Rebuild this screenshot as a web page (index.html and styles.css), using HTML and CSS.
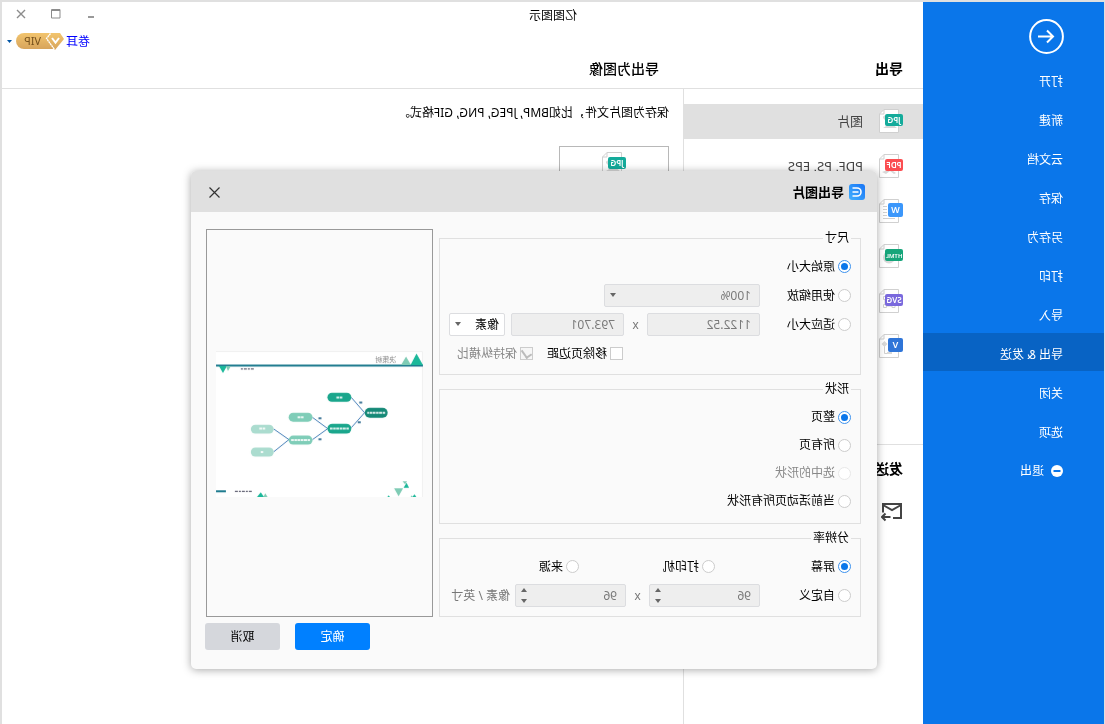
FILE: index.html
```html
<!DOCTYPE html>
<html lang="zh-CN">
<head>
<meta charset="utf-8">
<title>亿图图示</title>
<link rel="stylesheet" href="styles.css">
</head>
<body>
<div class="window">
  <nav class="sidebar">
    <button class="back" aria-label="返回">
      <svg width="35" height="35" viewBox="0 0 35 35" fill="none" stroke="#fff" stroke-width="2"><circle cx="17.500" cy="17.500" r="16.400"/><path d="M26 17.500H11M17 11.500l-6 6 6 6"/></svg>
    </button>
    <ul class="menu">
      <li><button class="menu-item">打开</button></li>
      <li><button class="menu-item">新建</button></li>
      <li><button class="menu-item">云文档</button></li>
      <li><button class="menu-item">保存</button></li>
      <li><button class="menu-item">另存为</button></li>
      <li><button class="menu-item">打印</button></li>
      <li><button class="menu-item">导入</button></li>
      <li><button class="menu-item current">导出 &amp; 发送</button></li>
      <li><button class="menu-item">关闭</button></li>
      <li><button class="menu-item">选项</button></li>
      <li><button class="menu-item exit"><svg width="12" height="12" viewBox="0 0 12 12"><circle cx="6" cy="6" r="6" fill="#fff"/><path d="M2.500 6h7" stroke="#0a76ea" stroke-width="2"/></svg>退出</button></li>
    </ul>
  </nav>

  <main class="content">
    <header class="titlebar">
      <div class="app-title">亿图图示</div>
      <div class="controls">
        <button class="control" aria-label="最小化"><svg width="10" height="10" viewBox="0 0 10 10"><path d="M2 7h6v2H2z" fill="#999"/></svg></button>
        <button class="control" aria-label="最大化"><svg width="10" height="10" viewBox="0 0 10 10"><path d="M1 1.500h8.500M1 .5h8.500v8.500H1z" fill="none" stroke="#8c8c8c"/></svg></button>
        <button class="control" aria-label="关闭窗口"><svg width="10" height="10" viewBox="0 0 10 10"><path d="M1 1l8 8M9 1l-8 8" stroke="#8c8c8c" stroke-width="1.400"/></svg></button>
      </div>
    </header>
    <div class="account">
      <a class="user" href="#">卷耳</a>
      <svg class="vip" width="48" height="17" viewBox="0 0 48 17">
        <defs><linearGradient id="gold" x1="0" y1="0" x2="0" y2="1"><stop offset="0" stop-color="#f2c46d"/><stop offset="1" stop-color="#d7a45c"/></linearGradient></defs>
        <path d="M8 0h32a8 8 0 0 1 0 16H8z" fill="url(#gold)"/>
        <path d="M4 0h10l4 5-9 12L0 6z" fill="url(#gold)"/>
        <path d="M13.500 .5l4 5-8 11" fill="none" stroke="#fff" stroke-width="1.300" stroke-dasharray="2 .5"/>
        <path d="M5 5l3.500 4.500L12 5" fill="none" stroke="#fff" stroke-width="2"/>
        <text x="23" y="12" class="vip-text">VIP</text>
      </svg>
      <svg class="account-caret" width="5" height="3" viewBox="0 0 5 3"><path d="M0 0h5L2.500 3z" fill="#0055a5"/></svg>
    </div>
    <div class="headings">
      <h2 class="list-heading">导出</h2>
      <h1 class="page-heading">导出为图像</h1>
    </div>
    <div class="columns">
      <aside class="formats">
        <button class="format selected">
          <svg class="file" viewBox="0 0 24 24"><path class="page" d="M4.500 .5H19l4.500 4.500v18.500h-19z"/><path class="fold" d="M19 .5V5h4.500"/><path class="mark" d="M6 19l6-5 8 5zM16 8a2 2 0 1 1 4 1l-2 2z"/><rect width="18" height="12" y="5" rx="2" fill="#14ab9b"/><text x="9" y="14" class="tag">JPG</text></svg>
          图片
        </button>
        <button class="format">
          <svg class="file" viewBox="0 0 24 24"><path class="page" d="M4.500 .5H19l4.500 4.500v18.500h-19z"/><path class="fold" d="M19 .5V5h4.500"/><path class="mark" d="M7 19l6-4 8 3-4 2-4-3-4 3z"/><rect width="18" height="12" y="5" rx="2" fill="#fb4d51"/><text x="9" y="14" class="tag">PDF</text></svg>
          PDF, PS, EPS
        </button>
        <button class="format" aria-label="Word">
          <svg class="file" viewBox="0 0 24 24"><path class="page" d="M4.500 .5H19l4.500 4.500v18.500h-19z"/><path class="fold" d="M19 .5V5h4.500M16 7.500h4M16 10.500h4M16 13.500h4M16 16.500h4M8 19.500h12"/><rect width="15" height="14" y="4" rx="2" fill="#3b97fb"/><text x="7.500" y="14" class="tag big">W</text></svg>
        </button>
        <button class="format" aria-label="HTML">
          <svg class="file" viewBox="0 0 24 24"><path class="page" d="M4.500 .5H19l4.500 4.500v18.500h-19z"/><path class="fold" d="M19 .5V5h4.500"/><circle class="mark" cx="14" cy="13.500" r="6"/><rect width="18" height="12" y="5" rx="2" fill="#16a57a"/><text x="9" y="13.500" class="tag small">HTML</text></svg>
        </button>
        <button class="format" aria-label="SVG">
          <svg class="file" viewBox="0 0 24 24"><path class="page" d="M4.500 .5H19l4.500 4.500v18.500h-19z"/><path class="fold" d="M19 .5V5h4.500M8 15.500h3v3H8zM16.500 15.500h3v3h-3zM11 17h5.500M16.500 7.500h3v3h-3zM18 11v5"/><rect width="18" height="12" y="5" rx="2" fill="#7a69dd"/><text x="9" y="14" class="tag">SVG</text></svg>
        </button>
        <button class="format" aria-label="Visio">
          <svg class="file" viewBox="0 0 24 24"><path class="page" d="M4.500 .5H19l4.500 4.500v18.500h-19z"/><path class="fold" d="M19 .5V5h4.500M18.500 10v9.500H11"/><path class="mark" d="M18.500 7l3 3-3 3-3-3zM11 18h5v2h-5z"/><rect width="15" height="14" y="4" rx="2" fill="#2f75d8"/><text x="7.500" y="14" class="tag big">V</text></svg>
        </button>
        <section class="send">
          <h2 class="send-heading">发送</h2>
          <button class="mail" aria-label="发送邮件"><svg width="22" height="20" viewBox="0 0 22 20" fill="none" stroke="#444" stroke-width="2"><path d="M20 10.500V2H2v14h8"/><path d="M2 3l9 5 9-5"/><path d="M12.500 15h8M17.500 11.500l3.500 3.500-3.500 3.500"/></svg></button>
        </section>
      </aside>
      <section class="details">
        <p class="description">保存为图片文件，比如BMP, JPEG, PNG, GIF格式。</p>
        <button class="card" aria-label="JPG">
          <svg class="file" viewBox="0 0 24 24"><path class="page" d="M4.500 .5H19l4.500 4.500v18.500h-19z"/><path class="fold" d="M19 .5V5h4.500"/><path class="mark" d="M6 19l6-5 8 5zM16 10a2 2 0 1 1 4 1l-2 2z"/><rect width="18" height="12" y="5" rx="2" fill="#14ab9b"/><text x="9" y="14" class="tag">JPG</text></svg>
        </button>
      </section>
    </div>
  </main>

  <form class="dialog" role="dialog" aria-labelledby="dialog-title">
    <header class="dialog-head">
      <svg width="16" height="16" viewBox="0 0 16 16"><defs><linearGradient id="logo" x1="0" y1="0" x2="1" y2="1"><stop offset="0" stop-color="#1874f5"/><stop offset="1" stop-color="#42b0ff"/></linearGradient></defs><rect width="16" height="16" rx="3" fill="url(#logo)"/><path d="M12.500 4H8a4 4 0 0 0 0 8h4.500M6.500 8h6" fill="none" stroke="#fff" stroke-width="1.600"/></svg>
      <h2 class="dialog-title" id="dialog-title">导出图片</h2>
      <button type="button" class="close" aria-label="关闭"><svg width="11" height="11" viewBox="0 0 11 11"><path d="M.5 .5l10 10M10.500 .5l-10 10" stroke="#333" stroke-width="1.200"/></svg></button>
    </header>
    <div class="dialog-body">
      <div class="groups">
        <fieldset class="group">
          <legend>尺寸</legend>
          <div class="row"><label class="choice"><input type="radio" name="size" checked>原始大小</label></div>
          <div class="row">
            <label class="choice lead"><input type="radio" name="size">使用缩放</label>
            <span class="picker wide"><select class="field" aria-label="缩放" disabled><option>100%</option></select><svg class="caret" viewBox="0 0 6 4"><path d="M0 0h6L3 4z"/></svg></span>
          </div>
          <div class="row">
            <label class="choice lead"><input type="radio" name="size">适应大小</label>
            <input class="field measure" type="text" value="1122.52" aria-label="宽度" disabled>
            <span class="times">x</span>
            <input class="field measure" type="text" value="793.701" aria-label="高度" disabled>
            <span class="picker unit"><select class="field" aria-label="单位"><option>像素</option></select><svg class="caret" viewBox="0 0 6 4"><path d="M0 0h6L3 4z"/></svg></span>
          </div>
          <div class="row options">
            <label class="choice"><input type="checkbox">移除页边距</label>
            <label class="choice muted"><input type="checkbox" checked disabled>保持纵横比</label>
          </div>
        </fieldset>
        <fieldset class="group shapes">
          <legend>形状</legend>
          <div class="row"><label class="choice"><input type="radio" name="shape" checked>整页</label></div>
          <div class="row"><label class="choice"><input type="radio" name="shape">所有页</label></div>
          <div class="row"><label class="choice muted"><input type="radio" name="shape" disabled>选中的形状</label></div>
          <div class="row"><label class="choice"><input type="radio" name="shape">当前活动页所有形状</label></div>
        </fieldset>
        <fieldset class="group">
          <legend>分辨率</legend>
          <div class="row thirds">
            <label class="choice"><input type="radio" name="dpi" checked>屏幕</label>
            <label class="choice"><input type="radio" name="dpi">打印机</label>
            <label class="choice"><input type="radio" name="dpi">来源</label>
          </div>
          <div class="row">
            <label class="choice lead"><input type="radio" name="dpi">自定义</label>
            <span class="picker spin"><input class="field" type="text" value="96" aria-label="水平分辨率" disabled><svg class="steps" viewBox="0 0 6 15"><path d="M0 4h6L3 0zM0 11h6l-3 4z"/></svg></span>
            <span class="times">x</span>
            <span class="picker spin"><input class="field" type="text" value="96" aria-label="垂直分辨率" disabled><svg class="steps" viewBox="0 0 6 15"><path d="M0 4h6L3 0zM0 11h6l-3 4z"/></svg></span>
            <span class="per">像素 / 英寸</span>
          </div>
        </fieldset>
      </div>
      <div class="preview">
        <svg class="sheet" viewBox="0 0 208 147">
          <rect width="208" height="147" fill="#fff"/>
          <path d="M.5 147V.5H208" fill="none" stroke="#f0f0f0"/>
          <path d="M0 13.500h208v2H0zM198 140h10v2h-10z" fill="#1c7a8e"/>
          <path d="M0 14L6.500 2.500 12.500 14zM197 15h8l-4 7zM159.500 147l3.500-5 4 5zM6.500 147l2-3 2.500 3zM33 147l1.500-2 1.500 2zM14 137.500l2.500-5 3 5z" fill="#1bb89a"/>
          <path d="M12 14l5-8.500 5 8.500zM193 15h5l-2 5zM156 147l2.500-4 2 4zM20 138h9l-4.500 8zM16 131h4.500L18 134zM10 147l1.500-2 1 2z" fill="#7fccb5"/>
          <text x="27" y="11.500" class="sheet-title">决策树</text>
          <path d="M170 18h14M172 141h18" stroke="#667" stroke-width="1.300" stroke-dasharray="3 1 2 1"/>
          <path d="M72 46.700L58.700 62 72 77M111 66.700L95.700 78 111 89M150 78.300L134.700 89 150 101.300" fill="none" stroke="#2f70b0" stroke-width=".9"/>
          <rect x="35.500" y="57" width="23" height="10" rx="5" fill="#158977"/>
          <g fill="#1aa68c"><rect x="72" y="42" width="24" height="9" rx="4.500"/><rect x="72" y="73" width="24" height="10" rx="5"/></g>
          <g fill="#7fcdb8"><rect x="111" y="62" width="24" height="9" rx="4.500"/><rect x="111" y="85" width="24" height="9" rx="4.500"/></g>
          <g fill="#abdccf"><rect x="150" y="74" width="23" height="9" rx="4.500"/><rect x="150" y="97" width="23" height="9" rx="4.500"/></g>
          <path d="M38 62h18M81 46.700h6M74.500 78h19M120 66.700h6M113.500 89.500h19M158.500 78h6M160.500 101.500h3" stroke="#fff" stroke-opacity=".85" stroke-width="2" stroke-dasharray="2.500 .6 3 .5"/>
          <path d="M61 51.700h3M62.500 71.500h3M102 67.700h3M102 88.700h3" stroke="#437a9a" stroke-width="2"/>
        </svg>
      </div>
    </div>
    <footer class="actions">
      <button type="button" class="action primary">确定</button>
      <button type="button" class="action">取消</button>
    </footer>
  </form>
</div>
</body>
</html>
```
FILE: styles.css
```css
* { box-sizing: border-box; }

body {
  margin: 0;
  background: #fff;
  font: 12px/16px "Noto Sans", "Noto Sans CJK SC", sans-serif;
  font-kerning: none;
  color: #000;
}

button, input, select { font: inherit; font-kerning: inherit; color: inherit; }
button { border: 0; padding: 0; background: none; }
h1, h2, p, ul { margin: 0; padding: 0; }
h1, h2 { font-size: 14px; line-height: 20px; }
li { list-style: none; }
svg { flex: none; display: block; }

/* The whole interface is shown as its mirror image. */
.window {
  position: relative;
  display: flex;
  min-height: 100vh;
  border: solid #e0e0e0;
  border-width: 2px 2px 0 1px;
  overflow: hidden;
  transform: scaleX(-1);
}

/* Sidebar */
.sidebar {
  flex: none;
  width: 181px;
  padding-top: 17px;
  background: #0a76ea;
  color: #fff;
}
.back { display: block; margin: 0 0 6px 40px; }
.menu { display: grid; gap: 1px; }
.menu-item {
  display: flex;
  align-items: center;
  gap: 7px;
  width: 100%;
  height: 38px;
  padding: 6px 0 0 41px;
}
.menu-item.current { background: #0863c4; }
.menu-item.exit { padding-top: 4px; }

/* Window header */
.content { flex: 1; display: flex; flex-direction: column; min-width: 0; }
.titlebar { display: flex; height: 26px; }
.app-title { flex: 1; text-align: center; line-height: 28px; }
.controls { display: flex; justify-content: flex-end; width: 181px; padding-right: 2px; }
.control { display: grid; place-items: center; width: 35px; height: 23px; }
.account {
  display: flex;
  align-items: center;
  justify-content: flex-end;
  gap: 2px;
  height: 26px;
  padding: 1px 5px 0 0;
}
.account-caret { margin-left: 2px; }
.user { color: #00f; text-decoration: none; }
.vip-text { font-size: 11px; fill: #76501c; }
.headings {
  display: flex;
  height: 35px;
  padding-top: 5px;
  border-bottom: 1px solid #e0e0e0;
}
.list-heading { width: 240px; padding-left: 20px; }
.page-heading { padding-left: 24px; font-weight: 500; }

/* Export formats */
.columns { flex: 1; display: flex; }
.formats {
  flex: none;
  display: flex;
  flex-direction: column;
  gap: 10px;
  width: 240px;
  padding-top: 15px;
  border-right: 1px solid #e0e0e0;
}
.format {
  display: flex;
  align-items: center;
  gap: 16px;
  height: 35px;
  padding: 0 0 2px 20px;
  font-size: 13px;
  color: #444;
}
.format.selected { background: #e0e0e0; }
.file { width: 24px; height: 24px; }
.page { fill: #fff; stroke: #d0d0d0; }
.fold { fill: none; stroke: #d0d0d0; }
.mark { fill: #d8d8d8; }
.tag { font-size: 8px; font-weight: 600; fill: #fff; text-anchor: middle; }
.tag.big { font-size: 9px; }
.tag.small { font-size: 6px; }
.send { margin-top: 70px; padding: 14px 0 0 20px; border-top: 1px solid #e0e0e0; }
.mail { display: block; margin-top: 23px; }
.details { flex: 1; padding: 16px 14px; }
.card {
  display: flex;
  justify-content: center;
  width: 110px;
  height: 90px;
  margin-top: 25px;
  padding-top: 5px;
  border: 1px solid #b8b8b8;
}

/* Export dialog */
.dialog {
  position: absolute;
  top: 169px;
  left: 227px;
  width: 686px;
  border-radius: 5px;
  background: #fafafa;
  box-shadow: 0 1px 8px rgba(0, 0, 0, 0.35);
}
.dialog-head {
  display: flex;
  align-items: center;
  gap: 5px;
  height: 41px;
  padding: 1px 17px 0 12px;
  border-radius: 5px 5px 0 0;
  background: #e0e0e0;
}
.dialog-title { flex: 1; font-size: 13px; }
.close { padding: 1px; }
.dialog-body {
  display: grid;
  grid-template-columns: 1fr 227px;
  gap: 6px;
  padding: 17px 15px 0 16px;
}
.groups { display: grid; gap: 6px; padding-top: 1px; }
.group {
  display: grid;
  gap: 6px;
  min-width: 0;
  margin: 0;
  padding: 9px;
  border: 1px solid #e0e0e0;
}
.group legend { padding: 0 2px; }
.row { display: flex; align-items: center; height: 23px; }
.shapes { padding-bottom: 11px; }
.shapes .row { height: 22px; }
.choice { display: flex; align-items: center; gap: 3px; }
.choice.lead { width: 91px; }
.muted { color: #888; }
.options { padding-left: 228px; gap: 14px; }
.thirds .choice { width: 136px; }

input[type="radio"], input[type="checkbox"] {
  appearance: none;
  flex: none;
  display: grid;
  place-items: center;
  width: 13px;
  height: 13px;
  margin: 0;
  border: 1px solid #ccc;
  background: #fff;
}
input[type="radio"] { border-radius: 50%; }
input[type="radio"]:checked { border-color: #3c92ee; }
input[type="radio"]:checked::before {
  content: "";
  width: 7px;
  height: 7px;
  border-radius: 50%;
  background: #0a76ea;
}
input[type="radio"]:disabled { border-color: #e8e8e8; }
input[type="checkbox"]:disabled { background: #f6f6f6; }
input[type="checkbox"]:checked::before {
  content: "";
  width: 5px;
  height: 8px;
  margin-bottom: 3px;
  border: solid #bbb;
  border-width: 0 2px 2px 0;
  rotate: 35deg;
}

.field {
  appearance: none;
  width: 100%;
  height: 23px;
  margin: 0;
  padding: 0 8px;
  border: 1px solid #dcdde0;
  border-radius: 2px;
  background: #fff;
  opacity: 1;
}
.field:disabled { background: #eee; color: #7a7a7a; }
.measure { width: 113px; }
.times { width: 23px; text-align: center; color: #777; }
.picker { position: relative; }
.wide { width: 156px; }
.unit { width: 56px; margin-left: 6px; }
.unit .field { padding: 0 5px; }
.spin { width: 111px; }
.caret, .steps { position: absolute; right: 6px; fill: #666; pointer-events: none; }
.caret { top: 9px; width: 6px; height: 4px; }
.steps { top: 4px; width: 6px; height: 15px; }
.per { margin-left: 5px; color: #777; }

.preview {
  display: grid;
  align-items: center;
  padding: 2px 9px 0;
  border: 1px solid #999;
}
.sheet { width: 100%; }
.sheet-title { font-size: 7px; fill: #888; }
.actions {
  display: flex;
  justify-content: flex-end;
  gap: 15px;
  padding: 6px 14px 19px;
}
.action {
  width: 75px;
  height: 27px;
  border-radius: 3px;
  background: #d5d7dc;
}
.action.primary { background: #0080ff; color: #fff; }
```
